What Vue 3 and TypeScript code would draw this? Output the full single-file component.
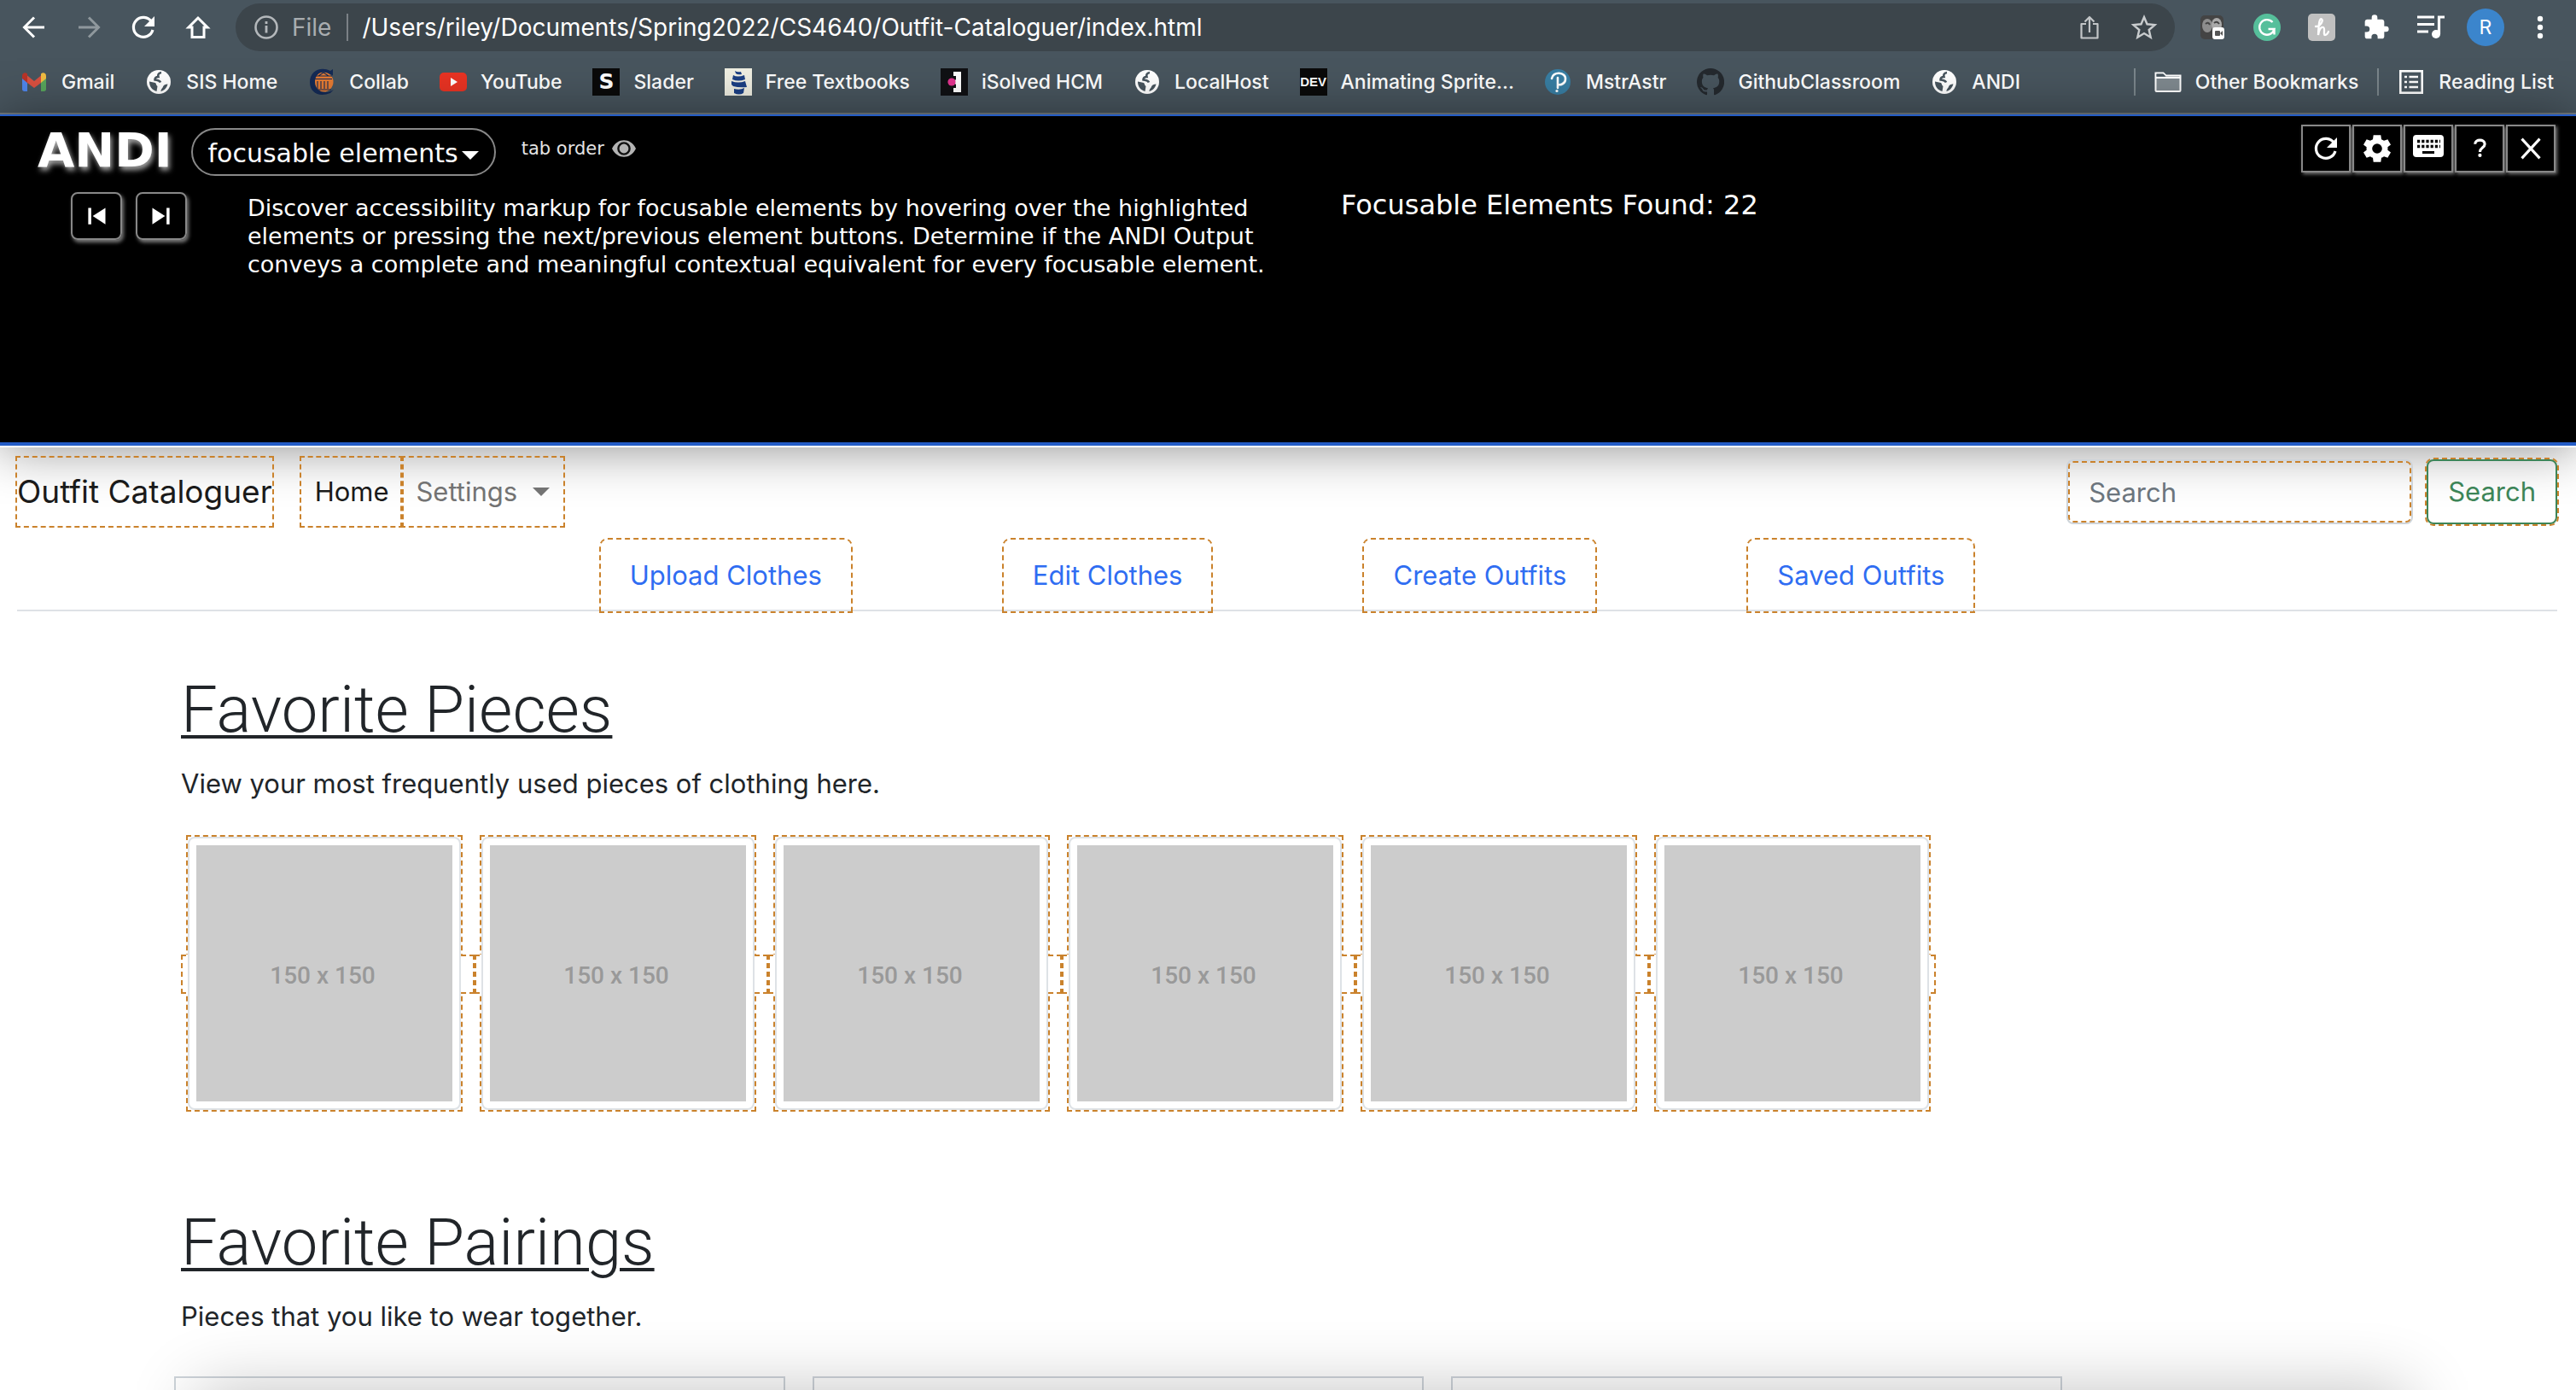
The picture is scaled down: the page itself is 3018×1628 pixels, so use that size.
<script setup lang="ts">
interface Item {
  icon: string
  label: string
  letters?: string
}

const bookmarks: Item[] = [
  { icon: 'gmail', label: 'Gmail' },
  { icon: 'globe', label: 'SIS Home' },
  { icon: 'collab', label: 'Collab' },
  { icon: 'youtube', label: 'YouTube' },
  { icon: 'slader', label: 'Slader', letters: 'S' },
  { icon: 'ship', label: 'Free Textbooks' },
  { icon: 'isolved', label: 'iSolved HCM' },
  { icon: 'globe', label: 'LocalHost' },
  { icon: 'dev', label: 'Animating Sprite...', letters: 'DEV' },
  { icon: 'pearson', label: 'MstrAstr' },
  { icon: 'github', label: 'GithubClassroom' },
  { icon: 'globe', label: 'ANDI' },
]

const navButtons: Item[] = [
  { icon: 'back', label: 'Back' },
  { icon: 'forward', label: 'Forward' },
  { icon: 'reload', label: 'Reload' },
  { icon: 'home', label: 'Home page' },
]

const extensions: Item[] = [
  { icon: 'mask', label: 'Privacy extension' },
  { icon: 'grammarly', label: 'Grammarly' },
  { icon: 'honey', label: 'Honey' },
  { icon: 'puzzle', label: 'Extensions' },
  { icon: 'playlist', label: 'Media' },
  { icon: 'avatar', label: 'Profile', letters: 'R' },
  { icon: 'dots', label: 'Menu' },
]

const andiControls: Item[] = [
  { icon: 'reload', label: 'Relaunch ANDI' },
  { icon: 'gear', label: 'ANDI settings' },
  { icon: 'keyboard', label: 'Keyboard shortcuts' },
  { icon: 'question', label: 'Help' },
  { icon: 'close', label: 'Remove ANDI' },
]

const tabs: string[] = ['Upload Clothes', 'Edit Clothes', 'Create Outfits', 'Saved Outfits']
const pieces = 6
const pairings = 3
</script>

<template>
  <div class="window">
    <svg class="sprite" aria-hidden="true">
      <symbol id="i-back" viewBox="0 0 32 32">
        <path d="M28 16H5M16 4.500 4.500 16 16 27.500" fill="none" stroke="#fff" stroke-width="3" />
      </symbol>
      <symbol id="i-forward" viewBox="0 0 32 32">
        <path d="M4 16h23M16 4.500 27.500 16 16 27.500" fill="none" stroke="#8f989d" stroke-width="3" />
      </symbol>
      <symbol id="i-reload" viewBox="0 0 32 32">
        <path d="M25.500 9.500A11.500 11.500 0 1 0 27 19" fill="none" stroke="#fff" stroke-width="3.200" />
        <path d="M29 3v12H17z" fill="#fff" />
      </symbol>
      <symbol id="i-home" viewBox="0 0 32 32">
        <path d="M16 5 5 16h4v11.500h14V16h4z" fill="none" stroke="#fff" stroke-width="3" />
      </symbol>
      <symbol id="i-info" viewBox="0 0 32 32">
        <circle cx="16" cy="16" r="12.500" fill="none" stroke="#b4b8bb" stroke-width="2.600" />
        <path d="M16 14v8.500M16 9v3" stroke="#b4b8bb" stroke-width="2.800" />
      </symbol>
      <symbol id="i-share" viewBox="0 0 32 32">
        <path d="M12 12H6.500v16.500h19V12H20M16 22V4M10.500 9.500 16 4l5.500 5.500" fill="none" stroke="#c3c6c8" stroke-width="2.200" stroke-linejoin="round" />
      </symbol>
      <symbol id="i-star" viewBox="0 0 32 32">
        <path d="m16 4 3.500 8.300 9 .8-6.800 5.900 2 8.800L16 23.100l-7.700 4.700 2-8.800-6.800-5.900 9-.8z" fill="none" stroke="#c9ccce" stroke-width="2.400" />
      </symbol>
      <symbol id="i-mask" viewBox="0 0 32 32">
        <rect x="2" y="2" width="27" height="28" rx="5" fill="#444" />
        <ellipse cx="10" cy="14" rx="6" ry="8" fill="#8d8d8d" />
        <ellipse cx="21" cy="13" rx="6" ry="8" fill="#aaa" />
        <path d="M8 12q3-3 5 1M18 11q3-3 6 1" fill="none" stroke="#444" stroke-width="2" />
        <rect x="16" y="16" width="14" height="14" rx="3" fill="#fff" />
        <rect x="19" y="20" width="6" height="6" rx="1" fill="#555" />
        <path d="m25 23 3-3v6z" fill="#555" />
      </symbol>
      <symbol id="i-grammarly" viewBox="0 0 32 32">
        <circle cx="16" cy="16" r="16" fill="#56bf9b" />
        <path d="M22.500 10A8.800 8.800 0 1 0 24.500 18H17.500M24.500 18v6.500" fill="none" stroke="#fff" stroke-width="2.400" />
      </symbol>
      <symbol id="i-honey" viewBox="0 0 32 32">
        <rect width="32" height="32" rx="5" fill="#c0c0c0" />
        <path d="M9 15c6 0 9-7 7-8.500S12.500 9 12 25c1-7 3.500-10 6-9s-.5 9 2 9 3-2 4-4" fill="none" stroke="#fff" stroke-width="2.300" stroke-linecap="round" />
      </symbol>
      <symbol id="i-puzzle" viewBox="0 0 24 24">
        <path d="M20.500 11H19V7c0-1.100-.9-2-2-2h-4V3.500a2.500 2.500 0 0 0-5 0V5H4c-1.100 0-2 .9-2 2v3.800h1.500a2.700 2.700 0 0 1 0 5.400H2V20c0 1.100.9 2 2 2h3.800v-1.500a2.700 2.700 0 0 1 5.400 0V22H17c1.100 0 2-.9 2-2v-4h1.500a2.500 2.500 0 0 0 0-5z" fill="#fff" />
      </symbol>
      <symbol id="i-playlist" viewBox="0 0 32 32">
        <path d="M0 4h20M0 12.500h20M0 21h13M25.500 24V4H32" fill="none" stroke="#fff" stroke-width="3.200" />
        <circle cx="22" cy="24" r="5" fill="#fff" />
      </symbol>
      <symbol id="i-dots" viewBox="0 0 32 32">
        <g fill="#fff"><circle cx="16" cy="6" r="3.200" /><circle cx="16" cy="16" r="3.200" /><circle cx="16" cy="26" r="3.200" /></g>
      </symbol>

      <symbol id="i-gmail" viewBox="0 0 32 32">
        <path d="M2 9v15.500C2 26 3 27 4.500 27H8V13z" fill="#4f86ec" />
        <path d="M30 9v15.500c0 1.500-1 2.500-2.500 2.500H24V13z" fill="#58a55c" />
        <path d="M8 8.500 16 15l8-6.500V17l-8 6-8-6z" fill="#d95040" />
        <path d="M2 9c0-4 4-4.500 6-2.500V17l-6-5z" fill="#b93428" />
        <path d="M30 9c0-4-4-4.500-6-2.500V17l6-5z" fill="#f2bd42" />
      </symbol>
      <symbol id="i-globe" viewBox="0 0 32 32">
        <circle cx="16" cy="16" r="14" fill="#fff" />
        <path d="M19 5c-4 .5-4 3-3.500 5-3 0-4 1-4 3.500 3 .5 5.500 0 6.500 3" fill="none" stroke="#48555e" stroke-width="2.600" />
        <path d="M5 15.500l7 1.500c1.500 1 .5 3 2.500 4l-1 6C8 25.500 5 21 5 15.500z" fill="#48555e" />
        <path d="M26.500 18.500c-1 4-4 7.500-8 8.500 0-3 2-3.500 2.500-5.500s3-3 5.500-3z" fill="#48555e" />
      </symbol>
      <symbol id="i-collab" viewBox="0 0 32 32">
        <circle cx="18" cy="16" r="11.500" fill="#e57b33" />
        <path d="M29 8.500V1l-3 2C15-3 2 3 2 16s11 18 24 13l4-4C19 32 8 26 8 16S17 1 26 7z" fill="#142a55" />
        <path d="M8 9h20M8 12.500h20M11 15v9M15 15v9M19 15v9M23 15v9M8 25h19M12 9l6-4 6 4" fill="none" stroke="#142a55" stroke-width="1.100" />
      </symbol>
      <symbol id="i-youtube" viewBox="0 0 32 32">
        <rect y="5" width="32" height="22" rx="5" fill="#e93323" />
        <path d="m13 11 8 5-8 5z" fill="#fff" />
      </symbol>
      <symbol id="i-ship" viewBox="0 0 32 32">
        <rect width="32" height="32" fill="#efeee2" />
        <path d="M12 3q3 2 7 1l1 3q-5 1-7-1zM10 8q5 3 13 0l1 5q-8 3-15 0zM8 15q8 3 16 0l2 7q-9 1-16-1l-2-2zM11 24q7 2 12-1l-1 6q-5 3-11 0z" fill="#1b3f84" />
      </symbol>
      <symbol id="i-isolved" viewBox="0 0 32 32">
        <rect width="32" height="32" fill="#101114" />
        <path d="M15 4h9v24h-9v-5h3v-4l-3-3 3-3v-4h-3z" fill="#fff" />
        <circle cx="13" cy="16" r="4.600" fill="#e2348f" />
      </symbol>
      <symbol id="i-pearson" viewBox="0 0 32 32">
        <circle cx="15" cy="16" r="15" fill="#387ea3" />
        <path d="M8 12c1-9 17-8 16 1 0 5-6 7-9 6M15 11v12" fill="none" stroke="#fff" stroke-width="2.600" stroke-linecap="round" />
        <circle cx="14" cy="26.500" r="1.600" fill="#fff" />
      </symbol>
      <symbol id="i-github" viewBox="0 0 16 16">
        <path d="M8 0a8 8 0 0 0-2.530 15.590c.4.070.55-.17.55-.38v-1.490c-2.010.37-2.530-.49-2.690-.94-.09-.23-.48-.94-.82-1.130-.28-.15-.68-.52-.01-.53.630-.01 1.080.58 1.230.82.720 1.210 1.870.87 2.330.66.070-.52.280-.87.510-1.070-1.780-.2-3.640-.89-3.640-3.950 0-.87.310-1.590.82-2.150-.08-.2-.36-1.020.08-2.120 0 0 .67-.21 2.200.82a7.600 7.600 0 0 1 4 0c1.530-1.040 2.200-.82 2.200-.82.440 1.100.16 1.920.08 2.120.51.560.82 1.270.82 2.150 0 3.070-1.870 3.750-3.650 3.950.290.250.54.730.54 1.480v2.200c0 .21.150.46.55.38A8 8 0 0 0 8 0z" fill="#24292e" />
      </symbol>
      <symbol id="i-folder" viewBox="0 0 32 32">
        <path d="M1.500 26V5.500h9l3 3h17V26q0 1-1 1h-27q-1 0-1-1z" fill="#7f898f" stroke="#fff" stroke-width="2" />
        <path d="M2.500 6.500h8l3 3H2.500z" fill="#48555e" />
        <path d="M1 11h30" stroke="#fff" stroke-width="2" />
      </symbol>
      <symbol id="i-list" viewBox="0 0 32 32">
        <rect x="3.300" y="3.300" width="25.400" height="25.400" fill="none" stroke="#fff" stroke-width="2.600" />
        <path d="M8 10h3M8 16h3M8 22h3M13.500 10H24M13.500 16H24M13.500 22H24" stroke="#fff" stroke-width="2.600" />
      </symbol>

      <symbol id="i-gear" viewBox="0 0 24 24">
        <path fill-rule="evenodd" d="M19.400 13a7.500 7.500 0 0 0 0-2l2.200-1.700-2.200-3.800-2.600 1a7.500 7.500 0 0 0-1.800-1L14.600 2.500H9.400L9 5.500a7.500 7.500 0 0 0-1.800 1l-2.600-1-2.200 3.800L4.600 11a7.500 7.500 0 0 0 0 2l-2.200 1.700 2.200 3.800 2.600-1a7.500 7.500 0 0 0 1.800 1l.4 3h5.200l.4-3a7.500 7.500 0 0 0 1.800-1l2.600 1 2.200-3.800zM12 15.500a3.500 3.500 0 1 1 0-7 3.500 3.500 0 0 1 0 7z" fill="#fff" />
      </symbol>
      <symbol id="i-keyboard" viewBox="0 0 36 32">
        <rect width="36" height="26" rx="4" fill="#fff" />
        <path d="M5 7.500h27M5 13.500h27" stroke="#000" stroke-width="3.600" stroke-dasharray="3.200 2" />
        <path d="M11 20.500h14" stroke="#000" stroke-width="3" />
      </symbol>
      <symbol id="i-question" viewBox="0 0 32 32">
        <path d="M10 10c0-7 13-7 13 0 0 5-6.500 5-6.500 10.500" fill="none" stroke="#fff" stroke-width="3.600" />
        <circle cx="16.500" cy="25" r="2.400" fill="#fff" />
      </symbol>
      <symbol id="i-close" viewBox="0 0 32 32">
        <path d="m4 3 24 26M28 3 4 29" stroke="#fff" stroke-width="3.600" />
      </symbol>
      <symbol id="i-previous" viewBox="0 0 32 32">
        <path d="M5 5h4v22H5zM28 5v22L11 16z" fill="#fff" />
      </symbol>
      <symbol id="i-next" viewBox="0 0 32 32">
        <path d="M27 5h-4v22h4zM4 5v22l17-11z" fill="#fff" />
      </symbol>
      <symbol id="i-eye" viewBox="0 0 30 22">
        <path d="M1 11C7-2 23-2 29 11 23 24 7 24 1 11z" fill="#b4b4b4" />
        <circle cx="15" cy="11" r="6.600" fill="none" stroke="#111" stroke-width="2.400" />
      </symbol>
    </svg>

    <header class="chrome">
      <div class="toolbar">
        <nav class="cells" aria-label="Browser navigation">
          <button v-for="b in navButtons" :key="b.icon" class="cell" :aria-label="b.label">
            <svg class="icon"><use :href="'#i-' + b.icon" /></svg>
          </button>
        </nav>
        <div class="address">
          <svg class="icon"><use href="#i-info" /></svg>
          <span class="scheme">File</span>
          <span class="path">/Users/riley/Documents/Spring2022/CS4640/Outfit-Cataloguer/index.html</span>
          <button class="cell" aria-label="Share"><svg class="icon"><use href="#i-share" /></svg></button>
          <button class="cell" aria-label="Bookmark this page"><svg class="icon"><use href="#i-star" /></svg></button>
        </div>
        <div class="cells">
          <button v-for="b in extensions" :key="b.icon" class="cell" :aria-label="b.label">
            <span v-if="b.letters" :class="['badge', b.icon]">{{ b.letters }}</span>
            <svg v-else class="icon"><use :href="'#i-' + b.icon" /></svg>
          </button>
        </div>
      </div>
      <div class="bookmarks">
        <a v-for="b in bookmarks" :key="b.label" class="bookmark" href="#">
          <span v-if="b.letters" :class="['badge', b.icon]">{{ b.letters }}</span>
          <svg v-else class="icon"><use :href="'#i-' + b.icon" /></svg>{{ b.label }}
        </a>
        <a class="bookmark divided push" href="#"><svg class="icon"><use href="#i-folder" /></svg>Other Bookmarks</a>
        <a class="bookmark divided" href="#"><svg class="icon"><use href="#i-list" /></svg>Reading List</a>
      </div>
    </header>

    <section class="andi" aria-label="ANDI">
      <div class="andi-head">
        <strong class="andi-logo">ANDI</strong>
        <button class="module">focusable elements<span class="caret"></span></button>
        <button class="tab-order">tab order <svg class="eye"><use href="#i-eye" /></svg></button>
        <div class="controls">
          <button v-for="c in andiControls" :key="c.icon" class="control" :aria-label="c.label">
            <svg :class="['icon', c.icon]"><use :href="'#i-' + c.icon" /></svg>
          </button>
        </div>
      </div>
      <div class="andi-body">
        <div class="steppers">
          <button class="stepper" aria-label="Previous element"><svg class="step-icon"><use href="#i-previous" /></svg></button>
          <button class="stepper" aria-label="Next element"><svg class="step-icon"><use href="#i-next" /></svg></button>
        </div>
        <p class="intro">
          Discover accessibility markup for focusable elements by hovering over the highlighted<br />
          elements or pressing the next/previous element buttons. Determine if the ANDI Output<br />
          conveys a complete and meaningful contextual equivalent for every focusable element.
        </p>
        <h2 class="found">Focusable Elements Found: 22</h2>
      </div>
    </section>

    <nav class="navbar">
      <a class="brand marked" href="#">Outfit Cataloguer</a>
      <a class="nav-link active marked" href="#">Home</a>
      <a class="nav-link marked" href="#">Settings<span class="caret"></span></a>
      <form class="search" @submit.prevent>
        <input class="search-box" type="search" placeholder="Search" aria-label="Search" />
        <button class="search-button marked">Search</button>
      </form>
    </nav>

    <nav class="tabs">
      <a v-for="t in tabs" :key="t" class="tab marked" href="#">{{ t }}</a>
    </nav>

    <main class="content">
      <section class="pieces">
        <h1 class="title">Favorite Pieces</h1>
        <p class="lead">View your most frequently used pieces of clothing here.</p>
        <div class="thumbs">
          <a v-for="n in pieces" :key="n" class="piece" href="#"><span class="thumb"><span class="placeholder">150 x 150</span></span></a>
        </div>
      </section>
      <section>
        <h1 class="title">Favorite Pairings</h1>
        <p class="lead">Pieces that you like to wear together.</p>
        <div class="cards">
          <article v-for="n in pairings" :key="n" class="card"></article>
        </div>
      </section>
    </main>
    <div class="dock-shadow"></div>
  </div>
</template>

<style>
body {
  margin: 0;
  background: #fff;
}
</style>

<style scoped>
* {
  box-sizing: border-box;
}

.window {
  position: relative;
  height: 100vh;
  overflow: hidden;
  background: #fff;
  color: #212529;
  font: 31px/48px Inter, sans-serif;
}

.sprite {
  position: absolute;
  width: 0;
  height: 0;
}

a {
  color: inherit;
  text-decoration: none;
}

button {
  margin: 0;
  padding: 0;
  border: 0;
  background: none;
  color: inherit;
  font: inherit;
}

.icon {
  display: block;
  flex: none;
  width: 32px;
  height: 32px;
}

.badge {
  flex: none;
  width: 32px;
  height: 32px;
  background: #0a0a0a;
  color: #fff;
  line-height: 32px;
  text-align: center;
}

.badge.slader {
  font: 700 25px/32px "DejaVu Sans", sans-serif;
}

.badge.dev {
  font: 700 15px/32px "Liberation Sans", sans-serif;
}

.badge.avatar {
  width: 44px;
  height: 44px;
  border-radius: 50%;
  background: #3b85cc;
  font-size: 23px;
  line-height: 44px;
}

/* Browser chrome */
.chrome {
  background: #48555e;
  border-bottom: 2px solid #757d82;
  color: #fff;
}

.toolbar {
  display: flex;
  gap: 12px;
  padding: 4px 10px 0 8px;
}

.cells {
  display: flex;
}

.cell {
  display: flex;
  align-items: center;
  justify-content: center;
  width: 64px;
  height: 56px;
}

.address {
  display: flex;
  flex: 1;
  align-items: center;
  height: 56px;
  padding: 0 4px 0 20px;
  border-radius: 28px;
  background: #3c454b;
  font-size: 28px;
}

.scheme {
  margin-left: 14px;
  padding-right: 18px;
  border-right: 2px solid #7b8186;
  color: #a9adb0;
  line-height: 32px;
}

.path {
  flex: 1;
  padding-left: 16px;
}

.bookmarks {
  display: flex;
  gap: 36px;
  align-items: center;
  height: 72px;
  padding: 0 26px 0 24px;
  font-size: 23px;
  font-weight: 500;
}

.bookmark {
  display: flex;
  gap: 16px;
  align-items: center;
  line-height: 32px;
  white-space: nowrap;
}

.divided {
  margin-left: -14px;
  padding-left: 22px;
  border-left: 2px solid #7b868c;
}

.push {
  margin-left: auto;
}

/* ANDI bar */
.andi {
  position: relative;
  min-height: 390px;
  border-top: 2px solid #245cc6;
  border-bottom: 2px solid #fff;
  background: #000;
  box-shadow: 0 2px 56px rgba(0, 0, 0, 0.44);
  color: #fff;
  font-family: "DejaVu Sans", sans-serif;
}

.andi::after {
  position: absolute;
  right: 0;
  bottom: 0;
  left: 0;
  height: 4px;
  background: #245cc6;
  content: "";
}

.andi-head {
  display: flex;
  align-items: flex-start;
  padding: 10px 24px 0 44px;
}

.andi-logo {
  margin-right: 22px;
  font-size: 56px;
  line-height: 60px;
  text-shadow: 2px 4px 6px #aaa;
}

.caret {
  display: inline-block;
  margin-left: 4px;
  border-top: 10px solid;
  border-right: 10px solid transparent;
  border-left: 10px solid transparent;
  vertical-align: middle;
}

.module {
  height: 56px;
  margin-top: 4px;
  padding: 4px 18px 0;
  border: 2px solid #888;
  border-radius: 28px;
  font-size: 30px;
  line-height: 48px;
}

.tab-order {
  display: flex;
  gap: 8px;
  align-items: center;
  margin: 12px 0 0 30px;
  color: #e4e4e4;
  font-size: 21px;
  line-height: 32px;
}

.eye {
  width: 30px;
  height: 22px;
}

.controls {
  display: flex;
  gap: 2px;
  margin-left: auto;
}

.control {
  display: flex;
  align-items: center;
  justify-content: center;
  width: 58px;
  height: 56px;
  border: 2px solid #888;
  box-shadow: 2px 2px 4px #777;
}

.icon.gear {
  width: 40px;
  height: 40px;
}

.icon.keyboard {
  width: 36px;
}

.icon.question,
.icon.close {
  width: 28px;
  height: 28px;
}

.andi-body {
  display: flex;
  padding: 19px 0 0 83px;
}

.steppers {
  display: flex;
  gap: 16px;
  width: 207px;
}

.stepper {
  display: flex;
  align-items: center;
  justify-content: center;
  width: 60px;
  height: 56px;
  border: 2px solid #888;
  border-radius: 8px;
  box-shadow: 2px 3px 4px #777;
}

.step-icon {
  width: 28px;
  height: 30px;
}

.intro {
  width: 1281px;
  margin: 2px 0 0;
  font-size: 27px;
  line-height: 33px;
  white-space: nowrap;
}

.found {
  margin: 0;
  font-size: 32px;
  font-weight: 400;
  line-height: 30px;
}

/* Outfit Cataloguer page */
.marked {
  outline: 2px dashed #ca822c;
}

.navbar {
  position: relative;
  display: flex;
  align-items: center;
  padding: 12px 22px 0 20px;
}

.brand {
  margin-right: 34px;
  color: #1a1a1a;
  font-size: 37px;
  line-height: 80px;
}

.nav-link {
  display: flex;
  align-items: center;
  padding: 0 16px;
  color: #737373;
  line-height: 80px;
}

.nav-link .caret {
  margin-left: 18px;
}

.nav-link.active {
  color: #1a1a1a;
}

.search {
  display: flex;
  gap: 16px;
  margin-left: auto;
}

.search-box {
  width: 406px;
  height: 76px;
  padding: 0 24px;
  border: 2px solid #ced4da;
  border-radius: 8px;
  outline: 2px dashed #ca822c;
  outline-offset: -4px;
  background: transparent;
  font: inherit;
}

.search-box::placeholder {
  color: #6c757d;
  opacity: 1;
}

.search-button {
  height: 76px;
  padding: 0 23px;
  border: 2px solid #3d8558;
  border-radius: 8px;
  color: #3d8558;
}

.tabs {
  display: flex;
  gap: 179px;
  justify-content: center;
  margin: 16px 22px 0 20px;
  border-bottom: 2px solid #dee2e6;
}

.tab {
  position: relative;
  margin-bottom: -2px;
  padding: 18px 34px;
  border-radius: 8px 8px 0 0;
  color: #2f6df2;
}

.content {
  padding: 66px 212px 0;
}

.pieces {
  margin-bottom: 106px;
}

.title {
  margin: 0 0 14px;
  font: 300 76px/98px Roboto, sans-serif;
  text-decoration: underline;
  text-decoration-thickness: 4px;
  text-underline-offset: 4px;
}

.lead {
  margin: 0;
}

.thumbs {
  display: flex;
  margin-top: 38px;
}

.piece {
  position: relative;
  padding: 0 16px 0 8px;
}

.piece:last-child {
  padding-right: 8px;
}

.piece::before {
  position: absolute;
  top: 0;
  left: 8px;
  width: 320px;
  height: 320px;
  outline: 2px dashed #ca822c;
  content: "";
}

.piece::after {
  position: absolute;
  top: 138px;
  right: 0;
  left: 0;
  height: 42px;
  border: 2px dashed #ca822c;
  background: #fff;
  content: "";
}

.thumb {
  position: relative;
  z-index: 1;
  display: block;
  width: 320px;
  padding: 8px;
  border: 2px solid #dee2e6;
  border-radius: 8px;
  background: #fff;
}

.placeholder {
  display: block;
  height: 300px;
  padding-right: 4px;
  background: #ccc;
  color: #999;
  font: 500 28px/306px Roboto, sans-serif;
  text-align: center;
}

.cards {
  display: flex;
  gap: 32px;
  margin: 46px 0 0 -8px;
}

.card {
  width: 716px;
  height: 400px;
  border: 2px solid #ced4da;
}

.dock-shadow {
  position: absolute;
  right: 216px;
  bottom: -60px;
  left: 250px;
  height: 60px;
  box-shadow: 0 20px 80px 20px rgba(0, 0, 0, 0.24);
}
</style>
